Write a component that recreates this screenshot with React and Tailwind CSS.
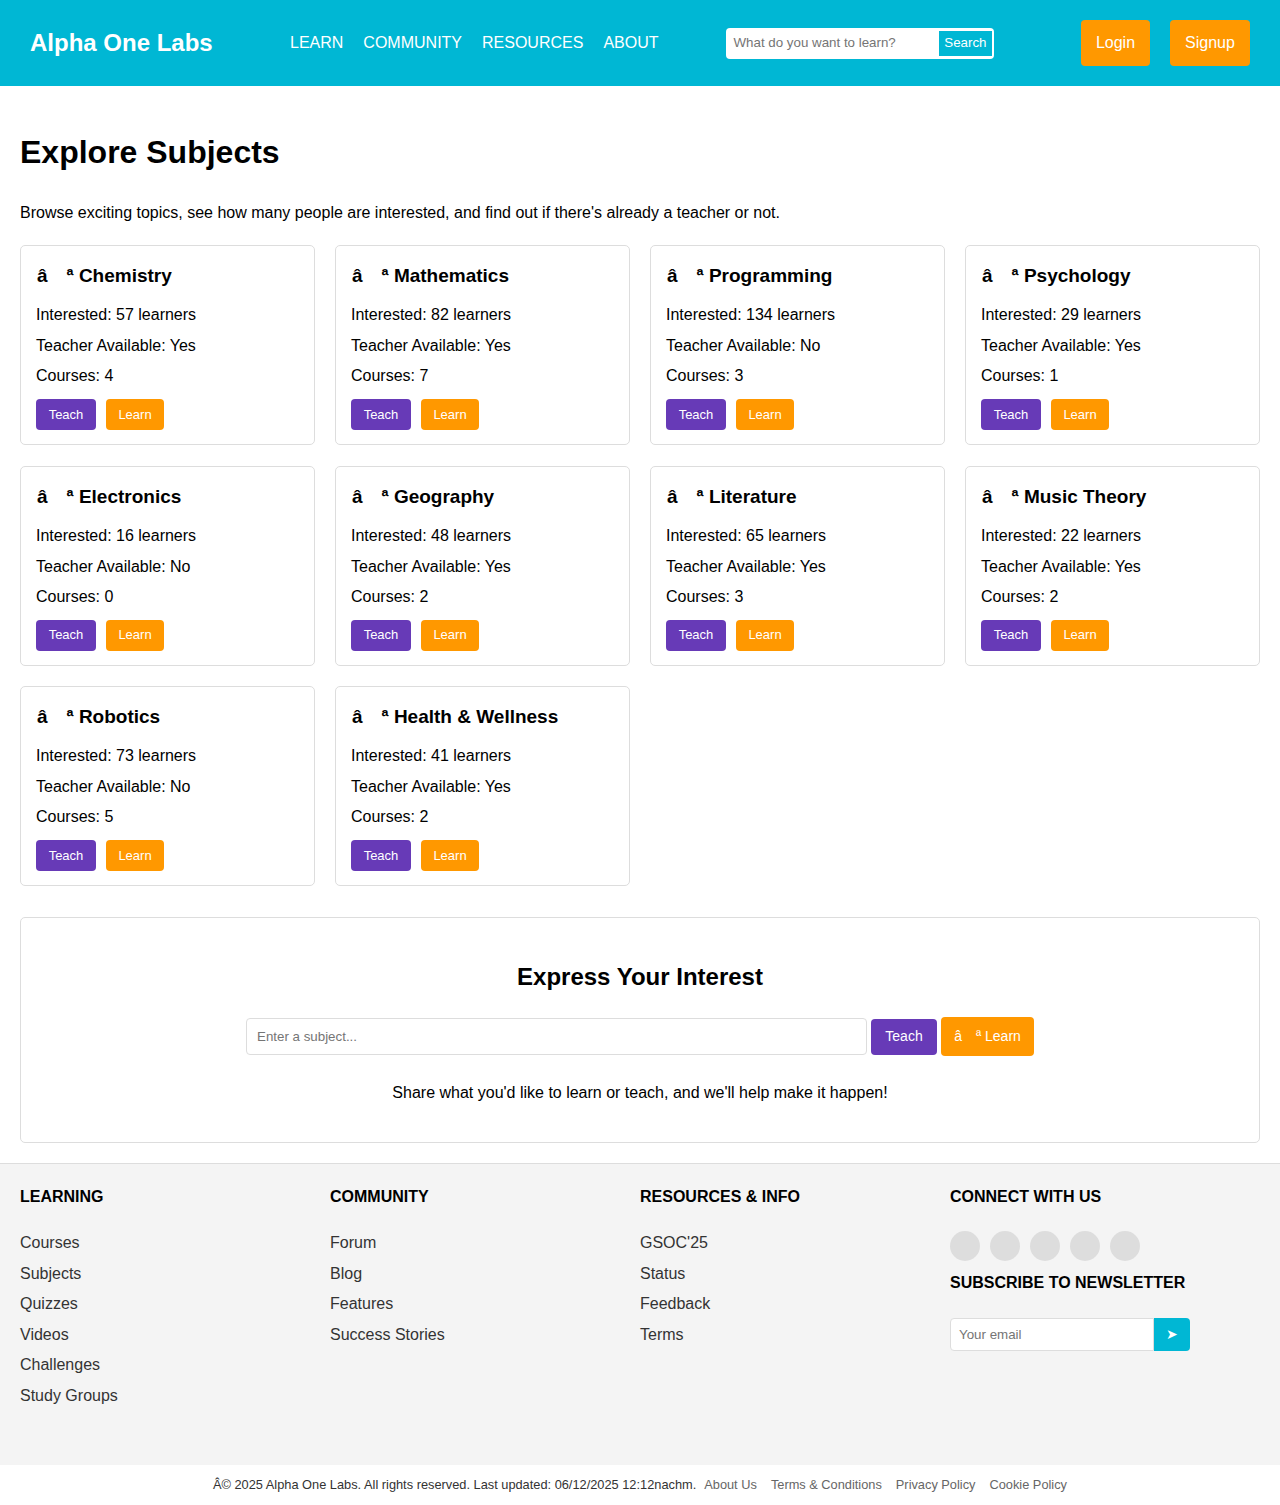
const subjects = [
  { name: "Chemistry", interested: 57, teacher: "Yes", courses: 4 },
  { name: "Mathematics", interested: 82, teacher: "Yes", courses: 7 },
  { name: "Programming", interested: 134, teacher: "No", courses: 3 },
  { name: "Psychology", interested: 29, teacher: "Yes", courses: 1 },
  { name: "Electronics", interested: 16, teacher: "No", courses: 0 },
  { name: "Geography", interested: 48, teacher: "Yes", courses: 2 },
  { name: "Literature", interested: 65, teacher: "Yes", courses: 3 },
  { name: "Music Theory", interested: 22, teacher: "Yes", courses: 2 },
  { name: "Robotics", interested: 73, teacher: "No", courses: 5 },
  { name: "Health & Wellness", interested: 41, teacher: "Yes", courses: 2 },
];

const footerCols = [
  { title: "LEARNING", links: ["Courses", "Subjects", "Quizzes", "Videos", "Challenges", "Study Groups"] },
  { title: "COMMUNITY", links: ["Forum", "Blog", "Features", "Success Stories"] },
  { title: "RESOURCES & INFO", links: ["GSOC'25", "Status", "Feedback", "Terms"] },
];

function SubjectCard({ s }) {
  return (
    <div className="border border-[#ddd] rounded-[5px] px-[15px] pt-[16px] h-[200px]">
      <h3 className="text-[19px] font-bold leading-[28px] mb-[15px] pl-[1px]">
        <span>â</span>
        <span className="inline-block w-[19px]" />
        <span>ª {s.name}</span>
      </h3>
      <p className="leading-[20px] mb-[11px]">Interested: {s.interested} learners</p>
      <p className="leading-[20px] mb-[10px]">Teacher Available: {s.teacher}</p>
      <p className="leading-[20px] mb-[13px]">Courses: {s.courses}</p>
      <div className="flex gap-[10px]">
        <button className="bg-[#673ab7] text-white text-[13px] h-[31px] w-[60px] rounded-[4px]">Teach</button>
        <button className="bg-[#ff9800] text-white text-[13px] h-[31px] w-[58px] rounded-[4px]">Learn</button>
      </div>
    </div>
  );
}

export default function App() {
  return (
    <div className="font-['Liberation_Sans',Arial,sans-serif] text-black bg-white">
      {/* Header */}
      <header className="bg-[#00b7d4] h-[86px] flex items-center px-[30px]">
        <div className="text-white font-bold text-[24px] w-[260px]">Alpha One Labs</div>
        <nav className="flex gap-[20px] text-white text-[16px] uppercase">
          <a>Learn</a>
          <a>Community</a>
          <a>Resources</a>
          <a>About</a>
        </nav>
        <div className="ml-[67px] flex items-center bg-white rounded-[4px] h-[31px] w-[268px] pl-[8px] pr-[2px]">
          <span className="text-[#757575] text-[13.33px] flex-1">What do you want to learn?</span>
          <span className="bg-[#00b7d4] text-white text-[13.33px] h-[25px] px-[5px] flex items-center">Search</span>
        </div>
        <div className="ml-auto flex gap-[20px]">
          <button className="bg-[#ff9800] text-white text-[16px] rounded-[4px] h-[46px] w-[69px]">Login</button>
          <button className="bg-[#ff9800] text-white text-[16px] rounded-[4px] h-[46px] w-[80px]">Signup</button>
        </div>
      </header>

      {/* Main */}
      <main className="px-5 pt-[44px]">
        <h1 className="text-[32px] font-bold leading-[40px] mt-[2px]">Explore Subjects</h1>
        <p className="text-[16px] mt-[30px] leading-[22px]">
          Browse exciting topics, see how many people are interested, and find out if there's already a teacher or not.
        </p>
        <div className="grid grid-cols-4 gap-x-[20px] gap-y-[20.5px] mt-[21px]">
          {subjects.map((s) => (
            <SubjectCard key={s.name} s={s} />
          ))}
        </div>

        <section className="border border-[#ddd] rounded-[5px] mt-[31px] h-[226px] flex flex-col items-center pt-[44px]">
          <h2 className="text-[24px] font-bold leading-[30px]">Express Your Interest</h2>
          <div className="flex items-center gap-[4px] mt-[25px]">
            <div className="w-[621px] h-[37px] border border-[#ddd] rounded-[4px] flex items-center px-[10px] text-[13.33px] text-[#757575]">
              Enter a subject...
            </div>
            <button className="bg-[#673ab7] text-white text-[14px] h-[36px] w-[66px] rounded-[4px]">Teach</button>
            <button className="bg-[#ff9800] text-white text-[14px] h-[39px] w-[93px] rounded-[4px]">
              â<span className="inline-block w-[14px]" />ª Learn
            </button>
          </div>
          <p className="mt-[25px] text-[16px]">Share what you'd like to learn or teach, and we'll help make it happen!</p>
        </section>
      </main>

      {/* Footer */}
      <footer className="mt-[20px] bg-[#f4f4f4] border-t border-[#ddd] h-[302px] px-5 pt-[23px]">
        <div className="grid grid-cols-4">
          {footerCols.map((c) => (
            <div key={c.title}>
              <h4 className="text-[16px] font-bold leading-[20px]">{c.title}</h4>
              <ul className="mt-[26px]">
                {c.links.map((l) => (
                  <li key={l} className="text-[16px] text-[#333] leading-[20px] mb-[10.6px]">{l}</li>
                ))}
              </ul>
            </div>
          ))}
          <div>
            <h4 className="text-[16px] font-bold leading-[20px]">CONNECT WITH US</h4>
            <div className="flex gap-[10px] mt-[24px]">
              {[0, 1, 2, 3, 4].map((i) => (
                <div key={i} className="w-[30px] h-[30px] rounded-full bg-[#ddd]" />
              ))}
            </div>
            <h4 className="text-[16px] font-bold leading-[20px] mt-[12px]">SUBSCRIBE TO NEWSLETTER</h4>
            <div className="flex mt-[25px] w-[240px] h-[33px]">
              <div className="flex-1 border border-[#ddd] bg-white rounded-l-[4px] flex items-center px-[8px] text-[13.33px] text-[#757575]">
                Your email
              </div>
              <div className="w-[36px] bg-[#00b7d4] rounded-r-[4px] flex items-center justify-center text-white text-[14px]">
                ➤
              </div>
            </div>
          </div>
        </div>
      </footer>

      <div className="h-[40px] flex items-center justify-center text-[12.8px] pb-[1px]">
        <span className="text-[#333]">Â© 2025 Alpha One Labs. All rights reserved. Last updated: 06/12/2025 12:12nachm.</span>
        <div className="flex gap-[14px] ml-[8px] text-[#666]">
          <a>About Us</a>
          <a>Terms &amp; Conditions</a>
          <a>Privacy Policy</a>
          <a>Cookie Policy</a>
        </div>
      </div>
    </div>
  );
}
